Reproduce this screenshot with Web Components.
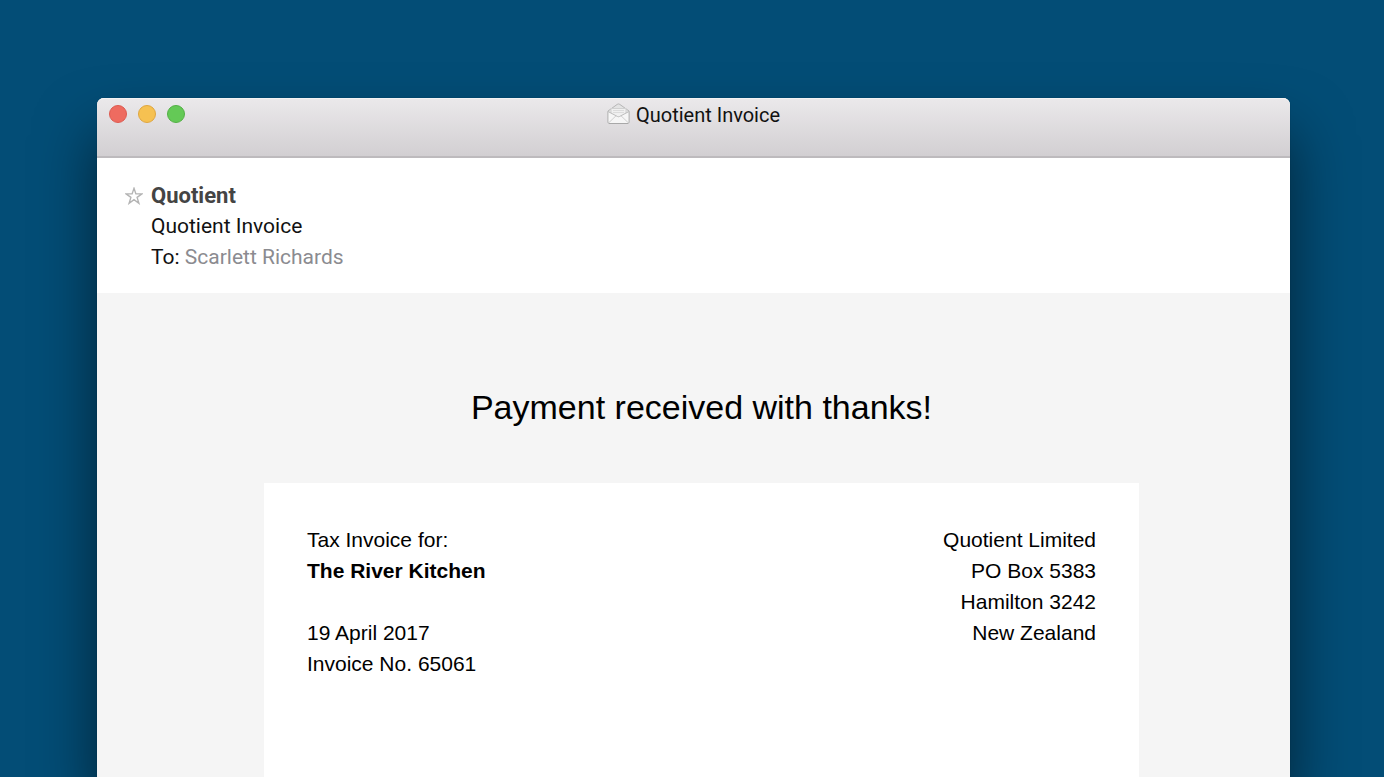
<!DOCTYPE html>
<html lang="en">
<head>
<meta charset="utf-8">
<meta name="viewport" content="width=device-width, initial-scale=1">
<title>Quotient Invoice</title>
<style>
    body{
        margin: 0;
        background-color: #034d76;
        font-family: "Liberation Sans", Arial, sans-serif;
        color: #000;
    }
</style>
</head>
<body>

<mail-window heading="Quotient Invoice">
    <mail-header slot="header" sender="Quotient" subject="Quotient Invoice" recipient="Scarlett Richards"></mail-header>
    <invoice-message heading="Payment received with thanks!">
        <invoice-card>
            <span slot="label">Tax Invoice for:</span>
            <strong slot="customer">The River Kitchen</strong>
            <time slot="date" datetime="2017-04-19">19 April 2017</time>
            <span slot="number">Invoice No. 65061</span>
            <span slot="address">Quotient Limited<br>PO Box 5383<br>Hamilton 3242<br>New Zealand</span>
        </invoice-card>
    </invoice-message>
</mail-window>

<script>
class MailWindow extends HTMLElement{
    constructor(){
        super();
        this.shadow = this.attachShadow({mode: 'open'});
    }

    connectedCallback() {
        this.render();
        this.shadow.querySelector('h1').textContent = this.getAttribute('heading');
    }

    render(){
        this.shadow.innerHTML =
        `
        <style>
            :host{
                display: flex;
                box-sizing: border-box;
                height: 100vh;
                padding: 98px 94px 0 97px;
                overflow: hidden;
            }
            section{
                display: flex;
                flex-direction: column;
                flex: 1;
                min-width: 0;
                border-radius: 7px 7px 0 0;
                background-color: #f5f5f5;
                box-shadow: 0 36px 60px rgba(0, 0, 0, .55), 0 0 1px rgba(0, 0, 0, .4);
            }
            .bar{
                display: grid;
                grid-template-columns: 1fr auto 1fr;
                align-items: start;
                box-sizing: border-box;
                height: 60px;
                padding: 5px 12px 0;
                border-radius: 7px 7px 0 0;
                border-bottom: 2px solid #bdbabd;
                background: linear-gradient(#ebe9eb, #d2cfd2);
                box-shadow: inset 0 1px #f3f2f3;
            }
            .controls{
                display: flex;
                gap: 11px;
                padding-top: 2px;
            }
            button{
                box-sizing: border-box;
                width: 18px;
                height: 18px;
                padding: 0;
                border: 1px solid #dd5a50;
                border-radius: 50%;
                background-color: #ee6b60;
            }
            .minimise{
                border-color: #dfa640;
                background-color: #f6c151;
            }
            .zoom{
                border-color: #53b045;
                background-color: #64c956;
            }
            .title{
                display: flex;
                align-items: flex-start;
                gap: 6px;
            }
            h1{
                margin: 0;
                font: 400 20px/24px Roboto, sans-serif;
                color: #111;
            }
            svg{
                display: block;
            }
        </style>
        <section>
            <div class="bar">
                <div class="controls">
                    <button class="close" aria-label="Close"></button>
                    <button class="minimise" aria-label="Minimise"></button>
                    <button class="zoom" aria-label="Zoom"></button>
                </div>
                <div class="title">
                    <svg width="23" height="22" viewBox="0 0 23 22" aria-hidden="true" stroke-linejoin="round">
                        <path d="M1 8 10.200 1.400q1.300-.9 2.600 0L22 8v11q0 1.500-1.500 1.500h-18Q1 20.500 1 19z" fill="#e3e3e3" stroke="#b5b5b5"/>
                        <path d="M4 5.500h15v7L11.500 15 4 12.500z" fill="#f0f0f0" stroke="#d0d0d0"/>
                        <path d="M6 7.500h11M6 9.500h11" fill="none" stroke="#dcdcdc"/>
                        <path d="M1 8.500 10.500 13.500q1 .5 2 0L22 8.500v10.500q0 1.500-1.500 1.500h-18Q1 20.500 1 19z" fill="#f6f6f6" stroke="#bcbcbc"/>
                        <path d="M2 19.500 9 12.800M21 19.500 14 12.800" fill="none" stroke="#cfcfcf"/>
                        <path d="M2 20.500h19" stroke="#a8a8a8"/>
                    </svg>
                    <h1></h1>
                </div>
            </div>
            <slot name="header"></slot>
            <slot></slot>
        </section>`;
    }
}
customElements.define('mail-window', MailWindow);


class MailHeader extends HTMLElement{
    constructor(){
        super();
        this.shadow = this.attachShadow({mode: 'open'});
    }

    connectedCallback() {
        this.render();
        this.shadow.querySelector('.sender').textContent = this.getAttribute('sender');
        this.shadow.querySelector('.subject').textContent = this.getAttribute('subject');
        this.shadow.querySelector('.recipient').textContent = this.getAttribute('recipient');
    }

    render(){
        this.shadow.innerHTML =
        `
        <style>
            :host{
                display: grid;
                grid-template-columns: 18px 1fr;
                column-gap: 8px;
                padding: 22px 28px 20px;
                background-color: #fff;
                font: 400 21px/31px Roboto, sans-serif;
                color: #111;
            }
            button{
                display: flex;
                align-items: center;
                padding: 0;
                border: 0;
                background: none;
            }
            p{
                grid-column: 2;
                margin: 0;
            }
            .sender{
                font-size: 22px;
                font-weight: 700;
                color: #444;
            }
            .recipient{
                color: #8b8b90;
            }
        </style>
        <button aria-label="Flag sender">
            <svg width="18" height="18" viewBox="0 0 18 18" aria-hidden="true" fill="none" stroke="#b4b4b4" stroke-width="1.400">
                <path d="M9 1.300 10.900 6.900H17L12.100 10.400 13.900 16.300 9 12.700 4.100 16.300 5.900 10.400 1 6.900H7.100z"/>
            </svg>
        </button>
        <p class="sender"></p>
        <p class="subject"></p>
        <p>To: <span class="recipient"></span></p>`;
    }
}
customElements.define('mail-header', MailHeader);


class InvoiceMessage extends HTMLElement{
    constructor(){
        super();
        this.shadow = this.attachShadow({mode: 'open'});
    }

    connectedCallback() {
        this.render();
        this.shadow.querySelector('h2').textContent = this.getAttribute('heading');
    }

    render(){
        this.shadow.innerHTML =
        `
        <style>
            :host{
                display: flex;
                flex-direction: column;
                align-items: center;
                flex: 1;
                padding: 94px 0 0 16px;
            }
            h2{
                margin: 0 0 56px;
                font-size: 34px;
                font-weight: 400;
                line-height: 40px;
            }
            ::slotted(invoice-card){
                flex: 1;
                width: 100%;
                max-width: 875px;
            }
        </style>
        <h2></h2>
        <slot></slot>`;
    }
}
customElements.define('invoice-message', InvoiceMessage);


class InvoiceCard extends HTMLElement{
    constructor(){
        super();
        this.shadow = this.attachShadow({mode: 'open'});
    }

    connectedCallback() {
        this.render();
    }

    render(){
        this.shadow.innerHTML =
        `
        <style>
            :host{
                display: flex;
                justify-content: space-between;
                align-items: flex-start;
                box-sizing: border-box;
                padding: 41px 43px;
                background-color: #fff;
                font-size: 21px;
                line-height: 31px;
            }
            .details, .group{
                display: flex;
                flex-direction: column;
            }
            .details{
                gap: 31px;
            }
            address{
                font-style: normal;
                text-align: right;
            }
        </style>
        <div class="details">
            <div class="group">
                <slot name="label"></slot>
                <slot name="customer"></slot>
            </div>
            <div class="group">
                <slot name="date"></slot>
                <slot name="number"></slot>
            </div>
        </div>
        <address><slot name="address"></slot></address>`;
    }
}
customElements.define('invoice-card', InvoiceCard);
</script>
</body>
</html>
